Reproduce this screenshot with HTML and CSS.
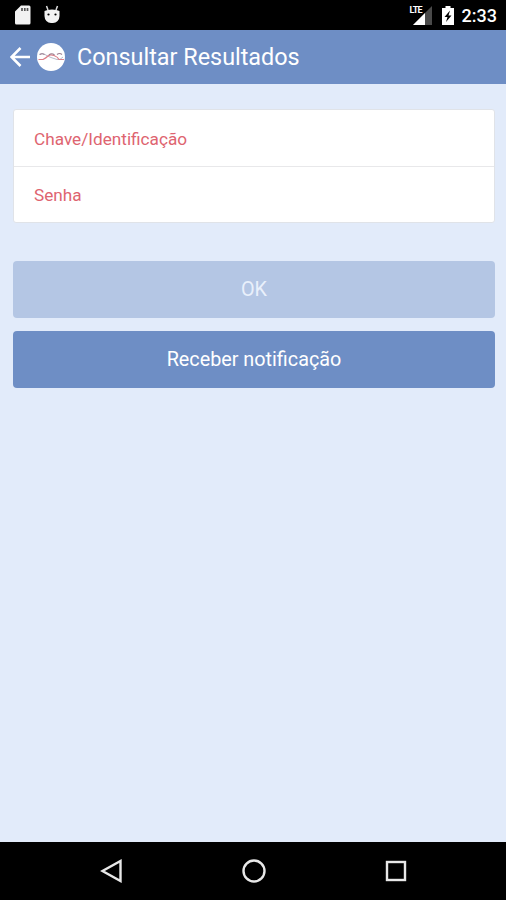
FILE: index.html
```
<!DOCTYPE html>
<html lang="pt">
<head>
  <meta charset="UTF-8">
  <meta name="viewport" content="width=device-width, initial-scale=1.0">
  <title>Consultar Resultados</title>
  <link rel="stylesheet" href="styles.css">
</head>
<body>
  <div class="status">
    <svg class="sd" width="16" height="20" viewBox="0 0 16 20">
      <path d="M6 0.500H14a1.500 1.500 0 0 1 1.500 1.500V18a1.500 1.500 0 0 1-1.500 1.500H1.500A1.500 1.500 0 0 1 0 18V6.500z" fill="#f2f2f2"/>
      <path d="M7 3v3M9.800 3v3M12.500 3v3" stroke="#555" stroke-width="1.700"/>
    </svg>
    <svg class="droid" width="18" height="20" viewBox="0 0 18 20">
      <path d="M3.500 1l1.500 4M14.500 1l-1.500 4" stroke="#ddd" stroke-width="1.500"/>
      <path d="M1.500 6Q4 4.500 9 4.500t7.500 1.500V11a6.500 7 0 0 1-6.500 7H8A6.500 7 0 0 1 1.500 11z" fill="#f2f2f2"/>
      <circle cx="5.500" cy="9.500" r="1.100"/>
      <circle cx="12.500" cy="9.500" r="1.100"/>
    </svg>
    <div class="signal">
      <svg width="19" height="19" viewBox="0 0 19 19">
        <path d="M19 0v19H0z" fill="#4a4a4a"/>
        <path d="M12 7v12H0z" fill="#fff"/>
      </svg>
      <span class="lte">LTE</span>
    </div>
    <svg class="battery" width="12" height="19" viewBox="0 0 12 19">
      <path d="M3.500 0h5v2H12v17H0V2h3.500z" fill="#fff"/>
      <path d="M8 4.500L2.500 11h3L4 16l5.500-6.500h-3z" fill="#000"/>
    </svg>
    <span class="time">2:33</span>
  </div>
  <div class="header">
    <svg class="back" width="20" height="20" viewBox="0 0 20 20">
      <path d="M20 10H2M10.500 1L1.500 10l9 9" fill="none" stroke="#fff" stroke-width="2.600"/>
    </svg>
    <svg class="logo" width="28" height="28" viewBox="0 0 28 28">
      <circle cx="14" cy="14" r="14" fill="#fff"/>
      <path d="M2 11.500Q5 9.500 8 11.500T14 14.500T20 16.500T26 14" fill="none" stroke="#b9bccb" stroke-width="1"/>
      <path d="M1.500 16.500H6Q9 15 11 13T17 12.500T22 16.500H27" fill="none" stroke="#dc7f88" stroke-width="1.200"/>
      <path d="M3 11.500Q5 10 7.500 11.500M12 12Q14.500 9.500 17.500 12M20 11.500Q22.500 9.500 25 11.500" fill="none" stroke="#9c7f90" stroke-width="1.100"/>
    </svg>
    <h1 class="title">Consultar Resultados</h1>
  </div>
  <div class="content">
    <div class="list">
      <div class="item">Chave/Identificação</div>
      <div class="item">Senha</div>
    </div>
    <button class="button disabled">OK</button>
    <button class="button">Receber notificação</button>
  </div>
  <div class="nav">
    <svg width="24" height="24" viewBox="0 0 24 24">
      <path d="M20.500 2v20L2.500 12z"/>
    </svg>
    <svg width="24" height="24" viewBox="0 0 24 24">
      <circle cx="12" cy="12" r="10.500"/>
    </svg>
    <svg width="24" height="24" viewBox="0 0 24 24">
      <rect x="3" y="3" width="18" height="18"/>
    </svg>
  </div>
</body>
</html>
```
FILE: styles.css
```
* {
  box-sizing: border-box;
}
body {
  margin: 0;
  height: 900px;
  display: flex;
  flex-direction: column;
  background: #e2ebfa;
  font-family: Roboto, sans-serif;
}
.status {
  height: 30px;
  display: flex;
  align-items: center;
  background: #000;
  color: #fff;
  padding: 0 9px 0 15px;
}
.droid {
  margin-left: 12px;
}
.signal {
  position: relative;
  height: 19px;
  margin-left: auto;
}
.lte {
  position: absolute;
  left: -3px;
  top: 0;
  background: #000;
  font-size: 9px;
  line-height: 9px;
  font-weight: bold;
  letter-spacing: -0.8px;
}
.battery {
  margin-left: 10px;
}
.time {
  margin-left: 8px;
  padding-top: 1px;
  font-size: 18px;
  font-weight: 500;
}
.header {
  height: 54px;
  display: flex;
  align-items: center;
  background: #6e8ec5;
  color: #fff;
  padding-left: 10px;
}
.logo {
  margin-left: 7px;
}
.title {
  margin: 0 0 0 12px;
  font-size: 23.4px;
  font-weight: normal;
}
.content {
  flex-grow: 1;
  padding: 25px 11px 0 13px;
}
.list {
  background: #fff;
  border: 1px solid #e0e3e8;
  border-radius: 3px;
  margin-bottom: 38px;
}
.item {
  height: 56px;
  line-height: 58px;
  padding-left: 20px;
  color: #de6470;
  font-size: 17.2px;
}
.item + .item {
  line-height: 56px;
  border-top: 1px solid #e8e8ea;
}
.button {
  display: block;
  width: 100%;
  height: 57px;
  margin: 0 0 13px;
  padding: 0 0 1px;
  border: none;
  border-radius: 4px;
  background: #6e8ec5;
  color: #fff;
  font-family: inherit;
  font-size: 19.8px;
}
.disabled {
  background: #b4c6e4;
  color: #e9f0fb;
}
.nav {
  height: 58px;
  display: flex;
  justify-content: center;
  align-items: center;
  gap: 118px;
  background: #000;
  padding-left: 2px;
}
.nav svg {
  fill: none;
  stroke: #e8e8e8;
  stroke-width: 2.4;
}
```
